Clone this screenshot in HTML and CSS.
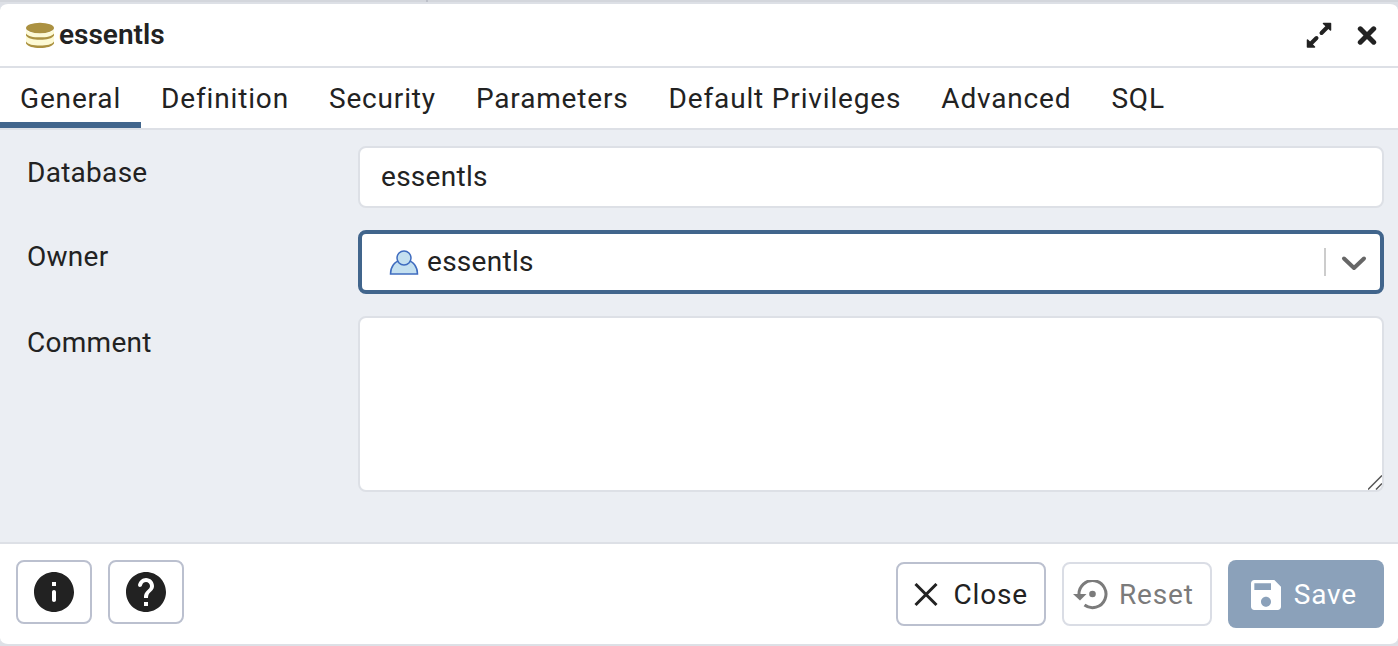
FILE: index.html
```html
<!DOCTYPE html>
<html lang="en">
<head>
<meta charset="utf-8">
<meta name="viewport" content="width=device-width, initial-scale=1">
<title>essentls</title>
<link rel="stylesheet" href="styles.css">
</head>
<body>
<div class="backdrop" aria-hidden="true"><div class="pane"></div><div class="pane pane-main"></div></div>
<main class="dialog">
  <header class="dialog-header">
    <svg class="db-icon" width="28" height="26" viewBox="0 0 28 26" fill="none" aria-hidden="true">
      <path d="M0 8C2 10.500 7 11.200 14 11.200S26 10.500 28 8v13.500c-2 2.500-7 4-14 4s-12-1.500-14-4z" fill="#fdfad5"/>
      <path d="M0 11.500c2 3 7 3.800 14 3.800s12-.800 14-3.800v2C26 16.500 21 17.700 14 17.700S2 16.500 0 13.500zM0 19.500c2 3 7 4 14 4s12-1 14-4v2c-2 3-7 4.500-14 4.500S2 24.500 0 21.500z" fill="#ab9141"/>
      <ellipse cx="14" cy="6" rx="14" ry="5.200" fill="#ab9141"/>
    </svg>
    <h1 class="title">essentls</h1>
    <div class="window-actions">
      <button class="icon-button" type="button" aria-label="Maximize">
        <svg width="26" height="26" viewBox="0 0 26 26" aria-hidden="true">
          <path d="M17.500 1.500h7v6.500zM1.500 18v7h7z" fill="#222" stroke="#222" stroke-width="1.500" stroke-linejoin="round"/>
          <path d="M15.500 11L22 4.500M4.500 22L10.500 16" stroke="#222" stroke-width="4" stroke-linecap="round"/>
        </svg>
      </button>
      <button class="icon-button" type="button" aria-label="Close dialog">
        <svg width="20" height="20" viewBox="0 0 20 20" aria-hidden="true"><path d="M3.300 3.800l13.400 13.400M16.700 3.800L3.300 17.200" stroke="#222" stroke-width="5" stroke-linecap="round"/></svg>
      </button>
    </div>
  </header>
  <div class="tabs" role="tablist">
    <button class="tab active" type="button" role="tab" aria-selected="true">General</button>
    <button class="tab" type="button" role="tab" aria-selected="false">Definition</button>
    <button class="tab" type="button" role="tab" aria-selected="false">Security</button>
    <button class="tab" type="button" role="tab" aria-selected="false">Parameters</button>
    <button class="tab" type="button" role="tab" aria-selected="false">Default Privileges</button>
    <button class="tab" type="button" role="tab" aria-selected="false">Advanced</button>
    <button class="tab" type="button" role="tab" aria-selected="false">SQL</button>
  </div>
  <form class="form" id="database-form">
    <label class="label" for="database">Database</label>
    <input class="field name" id="database" type="text" value="essentls">
    <label class="label" for="owner">Owner</label>
    <div class="select-wrap">
      <select class="field owner" id="owner"><option>essentls</option></select>
      <svg class="user-icon" width="30" height="26" viewBox="0 0 30 26" fill="#c4e0f0" stroke="#3f6cbf" stroke-width="1.500" aria-hidden="true">
        <path d="M1.500 25C1.500 17.500 6 12 11 12h8c5 0 9.500 5.500 9.500 13z"/>
        <circle cx="15" cy="9" r="7"/>
      </svg>
      <svg class="arrow" width="44" height="28" viewBox="0 0 44 28" fill="none" aria-hidden="true">
        <path d="M1 0v28" stroke="#ccc" stroke-width="2"/>
        <path d="M20 10.500l10 9.500 10-9.500" stroke="#666" stroke-width="4" stroke-linecap="round" stroke-linejoin="round"/>
      </svg>
    </div>
    <label class="label" for="comment">Comment</label>
    <div class="comment-wrap">
      <textarea class="field comment" id="comment"></textarea>
      <svg class="grip" width="14" height="15" viewBox="0 0 14 15" aria-hidden="true"><path d="M0 14.500L14 .500M8 14.500L14 8.500" stroke="#555" stroke-width="1.500"/></svg>
    </div>
  </form>
  <footer class="footer">
    <div class="help-actions">
      <button class="button square" type="button" aria-label="Object information">
        <svg width="40" height="40" viewBox="2 2 20 20" fill="#222" aria-hidden="true"><path d="M12 2C6.480 2 2 6.480 2 12s4.480 10 10 10 10-4.480 10-10S17.520 2 12 2zm0 15c-.550 0-1-.450-1-1v-4c0-.550.450-1 1-1s1 .450 1 1v4c0 .550-.450 1-1 1zm1-8h-2V7h2v2z"/></svg>
      </button>
      <button class="button square" type="button" aria-label="Help">
        <svg width="40" height="40" viewBox="2 2 20 20" fill="#222" aria-hidden="true"><path d="M12 2C6.480 2 2 6.480 2 12s4.480 10 10 10 10-4.480 10-10S17.520 2 12 2zm1 17h-2v-2h2v2zm2.070-7.750l-.900.920C13.450 12.900 13 13.500 13 15h-2v-.500c0-1.100.450-2.100 1.170-2.830l1.240-1.260c.370-.360.590-.860.590-1.410 0-1.100-.900-2-2-2-.930 0-1.710.640-1.930 1.500-.140.540-.570 1-1.130 1-.620 0-1.060-.610-.890-1.200C8.560 6.420 10.130 5 12 5c2.210 0 4 1.790 4 4 0 .880-.360 1.680-.930 2.250z"/></svg>
      </button>
    </div>
    <div class="form-actions">
      <button class="button close" type="button">
        <svg width="24" height="24" viewBox="0 0 24 24" aria-hidden="true"><path d="M1.500 1l21 21M22.500 1L1.500 22" stroke="#222" stroke-width="3"/></svg>
        Close
      </button>
      <button class="button reset" type="reset" form="database-form" disabled>
        <svg width="36" height="30" viewBox="0 0 36 30" aria-hidden="true">
          <path d="M6 15A13.500 13.500 0 1 1 11.500 25" fill="none" stroke="#7b7b7b" stroke-width="3"/>
          <path d="M0 14h13.500l-6.500 6.500z" fill="#7b7b7b"/><circle cx="19.500" cy="14" r="3.300" fill="#7b7b7b"/>
        </svg>
        Reset
      </button>
      <button class="button save" type="submit" form="database-form" disabled>
        <svg width="30" height="30" viewBox="3 3 18 18" fill="#fff" aria-hidden="true"><path d="M17 3H5c-1.110 0-2 .900-2 2v14c0 1.100.890 2 2 2h14c1.100 0 2-.900 2-2V7l-4-4zm-5 16c-1.660 0-3-1.340-3-3s1.340-3 3-3 3 1.340 3 3-1.340 3-3 3zm3-10H5V5h10v4z"/></svg>
        Save
      </button>
    </div>
  </footer>
</main>
</body>
</html>
```
FILE: styles.css
```css
* { box-sizing: border-box; }
body {
  margin: 0;
  min-height: 100vh;
  display: flex;
  flex-direction: column;
  background: #dde0e6;
  color: #222;
  font-family: Roboto, sans-serif;
  font-size: 28px;
  line-height: 40px;
  letter-spacing: 0.01em;
}
button, input, select, textarea { font: inherit; letter-spacing: inherit; color: inherit; }
svg { display: block; flex: none; }

.backdrop { display: flex; height: 2px; background: #d3d6dc; }
.pane { flex: 0 0 428px; border-right: 2px solid #bcbfc8; }
.pane-main { flex: 1; border: 0; }

.dialog {
  flex: 1;
  display: flex;
  flex-direction: column;
  background: #fff;
  border: solid #dde0e6;
  border-width: 2px 0;
  border-radius: 8px;
  overflow: hidden;
}

.dialog-header {
  display: flex;
  align-items: center;
  height: 64px;
  padding: 0 21px 0 26px;
  border-bottom: 2px solid #dde0e6;
}
.title { margin: 0 0 0 5px; font-size: 28px; font-weight: 600; letter-spacing: normal; }
.window-actions { display: flex; align-items: center; gap: 25px; margin-left: auto; }
.icon-button { padding: 0; border: 0; background: none; }

.tabs { display: flex; height: 62px; border-bottom: 2px solid #dde0e6; letter-spacing: 0.03em; }
.tab { padding: 8px 20px 0; border: 0; border-bottom: 6px solid transparent; background: none; white-space: nowrap; }
.tab.active { border-bottom-color: #41658c; }

.form {
  flex: 1;
  display: grid;
  grid-template-columns: 331px minmax(0, 1fr);
  align-content: start;
  row-gap: 22px;
  padding: 16px 14px 50px 27px;
  background: #ebeef3;
}
.label { padding-top: 7px; }
.field {
  display: block;
  width: 100%;
  height: 62px;
  padding: 0 21px;
  border: 2px solid #dde0e6;
  border-radius: 8px;
  outline: 0;
  background: #fff;
}
.name { padding-bottom: 2px; }
.select-wrap, .comment-wrap { position: relative; }
.owner { height: 64px; padding: 0 60px 0 65px; border: 4px solid #41658c; appearance: none; }
.user-icon { position: absolute; left: 31px; top: 19px; pointer-events: none; }
.arrow { position: absolute; right: 16px; top: 18px; pointer-events: none; }
.comment { height: 176px; padding: 10px 21px; resize: none; }
.grip { position: absolute; right: 2px; bottom: 2px; pointer-events: none; }

.footer {
  display: flex;
  justify-content: space-between;
  padding: 16px 14px 16px 16px;
  border-top: 2px solid #dde0e6;
  letter-spacing: 0.03em;
}
.help-actions { display: flex; align-items: flex-start; gap: 16px; }
.form-actions { display: flex; align-items: center; gap: 16px; }
.button {
  display: flex;
  align-items: center;
  height: 64px;
  padding: 2px 16px 0;
  border: 2px solid #bbc0cf;
  border-radius: 8px;
  background: #fff;
}
.square { width: 76px; padding: 0; justify-content: center; }
.close { gap: 15px; }
.reset { gap: 10px; padding-left: 9px; border-color: #dadde5; color: #7b7b7b; }
.save { gap: 13px; height: 68px; padding: 2px 27px 0 23px; border: 0; background: #8ba1ba; color: #fff; }
```
